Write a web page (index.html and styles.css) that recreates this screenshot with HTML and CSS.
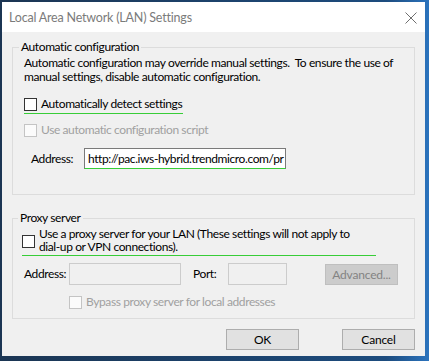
FILE: index.html
```html
<!DOCTYPE html>
<html lang="en">
<head>
    <meta charset="UTF-8">
    <title>Local Area Network (LAN) Settings</title>
    <link rel="stylesheet" href="styles.css">
</head>
<body>

    <div class="window">
        <div class="titlebar">
            <span class="title">Local Area Network (LAN) Settings</span>
            <svg class="close" width="12" height="12" viewBox="0 0 12 12">
                <path d="M0.5 0.5L11.5 11.5M11.5 0.5L0.5 11.5" stroke="#6e6e6e" stroke-width="1" fill="none"/>
            </svg>
        </div>

        <div class="dialog">
            <fieldset class="group group-auto">
                <legend>Automatic configuration</legend>
                <p class="note">Automatic configuration may override manual settings.&nbsp; To ensure the use of<br>manual settings, disable automatic configuration.</p>
                <label class="check marked detect"><span class="box"></span>Automatically detect settings</label>
                <label class="check disabled script"><span class="box"></span>Use automatic configuration script</label>
                <div class="field-row">
                    <span class="field-label">Address:</span>
                    <div class="textbox url">http://pac.iws-hybrid.trendmicro.com/pr</div>
                </div>
            </fieldset>

            <fieldset class="group group-proxy">
                <legend>Proxy server</legend>
                <label class="check marked use-proxy"><span class="box"></span><span>Use a proxy server for your LAN (These settings will not apply to<br>dial-up or VPN connections).</span></label>
                <div class="field-row proxy-row">
                    <span class="field-label">Address:</span>
                    <div class="textbox off proxy-address"></div>
                    <span class="field-label port-label">Port:</span>
                    <div class="textbox off proxy-port"></div>
                    <button class="btn btn-off">Advanced...</button>
                </div>
                <label class="check disabled bypass"><span class="box"></span>Bypass proxy server for local addresses</label>
            </fieldset>

            <div class="buttons">
                <button class="btn">OK</button>
                <button class="btn">Cancel</button>
            </div>
        </div>
    </div>

</body>
</html>
```

FILE: styles.css
```css
:root {
    --face: #f0f0f0;
    --text: #000000;
    --text-off: #a0a0a0;
    --group-line: #dcdcdc;
    --mark: #37cd37;
}

* {
    margin: 0;
    padding: 0;
    box-sizing: border-box;
    font-family: Lato, 'Segoe UI', sans-serif;
}

body {
    width: 429px;
    height: 361px;
    overflow: hidden;
    background: linear-gradient(to right, #1b3553 0%, #1d4c7e 90%, #2b73bd 100%);
}

.window {
    width: 423px;
    height: 354px;
    margin: 2px 4px 5px 2px;
    background: var(--face);
    display: flex;
    flex-direction: column;
    overflow: hidden;
}

.titlebar {
    height: 30px;
    flex-shrink: 0;
    background: #ffffff;
    display: flex;
    align-items: center;
    justify-content: space-between;
    padding: 0 8px 0 7px;
}

.title {
    font-size: 12.5px;
    letter-spacing: -0.2px;
    color: #7b7b7b;
    white-space: nowrap;
}

.close {
    margin-top: 2px;
}

.dialog {
    padding: 8px 10px 0 10px;
    font-size: 12px;
    letter-spacing: -0.4px;
    color: var(--text);
    line-height: 14px;
    white-space: nowrap;
}

.group {
    border: 1px solid var(--group-line);
    padding: 2px 10px 0 11px;
}

.group legend {
    margin-left: -5px;
    padding: 0 2px;
    line-height: 14px;
}

.group-auto {
    padding-bottom: 25px;
}

.note {
    line-height: 14px;
}

.check {
    display: flex;
    align-items: center;
    line-height: 14px;
}

.check .box {
    width: 13px;
    height: 13px;
    border: 1px solid #333333;
    background: #ffffff;
    margin-right: 4px;
    flex-shrink: 0;
}

.check.marked {
    border-bottom: 1px solid var(--mark);
    padding-bottom: 2px;
}

.check.disabled {
    color: var(--text-off);
}

.check.disabled .box {
    border-color: #c4c4c4;
    background: #fbfbfb;
}

.detect {
    width: 159px;
    margin-top: 13px;
}

.script {
    margin-top: 9px;
}

.field-row {
    display: flex;
    align-items: center;
}

.field-label {
    flex-shrink: 0;
}

.group-auto .field-row {
    margin-top: 11px;
}

.group-auto .field-label {
    margin-left: 7px;
    width: 53px;
}

.textbox {
    height: 21px;
    flex-shrink: 0;
    border: 1px solid #7a7a7a;
    background: #ffffff;
    padding: 0 3px;
    line-height: 19px;
    overflow: hidden;
}

.textbox.url {
    width: 202px;
    border-bottom-color: var(--mark);
}

.textbox.off {
    height: 22px;
    border-color: #cccccc;
    background: var(--face);
}

.group-proxy {
    margin-top: 16px;
    padding: 2px 10px 9px 10px;
}

.use-proxy {
    width: 354px;
    margin-left: -1px;
    line-height: 13px;
    padding-bottom: 0;
}

.use-proxy .box {
    margin-top: 2px;
}

.proxy-row {
    margin-top: 7px;
}

.proxy-row .field-label {
    margin-left: 1px;
    width: 45px;
}

.proxy-address {
    width: 112px;
}

.proxy-row .port-label {
    margin-left: 12px;
    width: 35px;
}

.proxy-port {
    width: 59px;
}

.btn {
    height: 21px;
    width: 73px;
    flex-shrink: 0;
    border: 1px solid #adadad;
    background: #e1e1e1;
    font-size: 12px;
    letter-spacing: -0.2px;
    color: var(--text);
}

.btn-off {
    margin-left: 38px;
    border-color: #bfbfbf;
    background: #cccccc;
    color: #838383;
}

.bypass {
    margin: 10px 0 0 46px;
}

.buttons {
    display: flex;
    justify-content: flex-end;
    gap: 43px;
    margin-top: 10px;
}
```
